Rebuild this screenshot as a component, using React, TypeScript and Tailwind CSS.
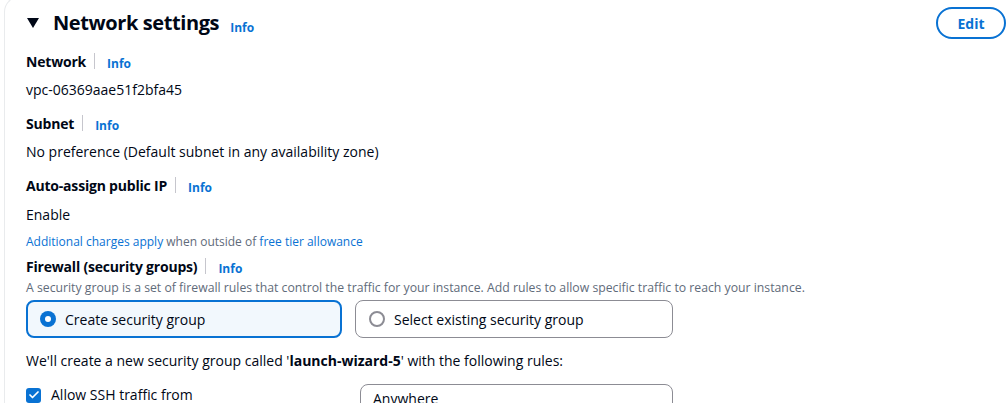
import { Check } from "lucide-react";

const Info = () => <span className="text-[12px] font-bold text-[#0972d3]">Info</span>;

const Label = ({ text }: { text: string }) => (
  <div className="flex items-center h-[20px]">
    <span className="text-[14px] font-bold text-[#000716] tracking-[-0.2px]">{text}</span>
    <span className="ml-[8px] mr-[12px] h-[16px] w-px bg-[#c6c6cd]" />
    <span className="mt-[2px]"><Info /></span>
  </div>
);

const App = () => {
  return (
    <div className="w-[1006px] h-[403px] overflow-hidden bg-white" style={{ fontFamily: '"Open Sans", "Noto Sans", Arial, sans-serif' }}>
      <div className="ml-[4px] -mt-[4px] border-l border-t border-[#e9ebed] rounded-tl-[16px] pl-[21px] pr-0 text-[#000716]">
        {/* Header */}
        <div className="flex items-center justify-between pt-[10px]">
          <div className="flex items-center">
            <svg width="12" height="10" viewBox="0 0 12 10" className="ml-[1px] mr-[14px]">
              <path d="M0 0h12L6 10z" fill="#000716" />
            </svg>
            <span className="text-[20px] font-bold leading-[26px] tracking-[-0.4px]">Network settings</span>
            <span className="ml-[11px] mt-[5px]"><Info /></span>
          </div>
          <button type="button" className="h-[32px] w-[70px] rounded-full border-2 border-[#0972d3] text-[14px] font-bold text-[#0972d3]">
            Edit
          </button>
        </div>

        <div className="mt-[12px]"><Label text="Network" /></div>
        <div className="mt-[9px] text-[14px] leading-[20px]">vpc-06369aae51f2bfa45</div>

        <div className="mt-[13px]"><Label text="Subnet" /></div>
        <div className="mt-[9px] text-[14px] leading-[20px]">No preference (Default subnet in any availability zone)</div>

        <div className="mt-[13px]"><Label text="Auto-assign public IP" /></div>
        <div className="mt-[10px] text-[14px] leading-[20px]">Enable</div>
        <div className="mt-[9px] text-[12px] leading-[16px] text-[#5f6b7a]">
          <span className="text-[#0972d3]">Additional charges apply</span> when outside of{" "}
          <span className="text-[#0972d3]">free tier allowance</span>
        </div>

        <div className="mt-[6px]"><Label text="Firewall (security groups)" /></div>
        <div className="mt-[4px] text-[12.25px] leading-[16px] text-[#5f6b7a]">
          A security group is a set of firewall rules that control the traffic for your instance. Add rules to allow specific traffic to reach your instance.
        </div>

        <div className="mt-[4px] flex gap-[13px]">
          <div className="flex h-[38px] w-[316px] items-center rounded-[8px] border-2 border-[#0972d3] bg-[#f2f8fd] px-[12px]">
            <span className="flex h-[16px] w-[16px] items-center justify-center rounded-full bg-[#0972d3]">
              <span className="h-[6px] w-[6px] rounded-full bg-white" />
            </span>
            <span className="ml-[9px] text-[14px]">Create security group</span>
          </div>
          <div className="flex h-[38px] w-[318px] items-center rounded-[8px] border border-[#8c8c94] px-[13px]">
            <span className="h-[16px] w-[16px] rounded-full border-2 border-[#8c8c94]" />
            <span className="ml-[9px] text-[14px]">Select existing security group</span>
          </div>
        </div>

        <div className="mt-[13px] text-[14px] leading-[20px]">
          We'll create a new security group called '<span className="font-bold">launch-wizard-5</span>' with the following rules:
        </div>

        <div className="mt-[13px] flex items-start">
          <div className="flex w-[334px] items-center">
            <span className="mt-[1px] flex h-[15px] w-[15px] items-center justify-center rounded-[3px] bg-[#0972d3]">
              <Check className="h-[12px] w-[12px] text-white" strokeWidth={3.5} />
            </span>
            <span className="ml-[10px] text-[14px]">Allow SSH traffic from</span>
          </div>
          <div className="mt-0 h-[34px] w-[313px] rounded-[8px] border border-[#8c8c94] px-[12px] pt-[3px] text-[14px]">
            Anywhere
          </div>
        </div>
      </div>
    </div>
  );
};

export default App;
